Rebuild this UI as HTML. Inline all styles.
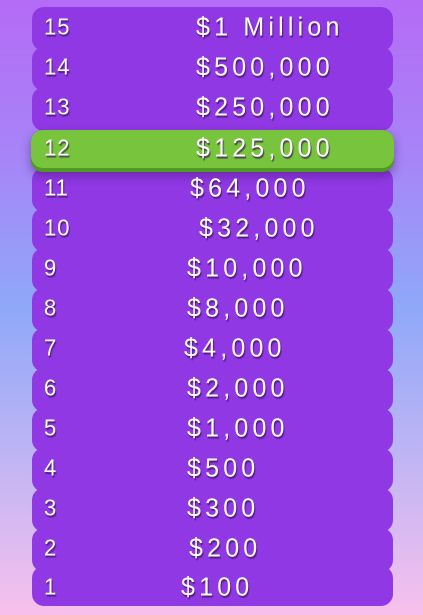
<!DOCTYPE html>
<html><head><style>
html,body{margin:0;padding:0}
body{width:423px;height:615px;position:relative;overflow:hidden;
background:linear-gradient(180deg,#b46bf6 0%,#a784f7 25%,#8fa8f8 50%,#c7b7f3 78%,#f7c0ec 100%);
font-family:"Liberation Sans",sans-serif;}
.r{position:absolute;left:32px;width:361px;height:44px;background:#9138e5;border-radius:12px;}
.t{position:absolute;color:#fff;font-size:25px;letter-spacing:4.2px;text-shadow:1px 2px 1px rgba(60,20,90,.75);line-height:40px;transform:scaleY(1.05)}
.n{left:44px;font-size:22px;letter-spacing:1px}
.g{position:absolute;left:31px;top:130px;width:363px;height:42px;background:#4f9a22;border-radius:12px;box-shadow:0 4px 10px rgba(60,20,100,.45)}
.g::before{content:"";position:absolute;left:0;top:0;right:0;height:38px;background:#78c43c;border-radius:12px}
</style></head><body>
<div class="r" style="top:7px"></div>
<div class="r" style="top:47px"></div>
<div class="r" style="top:87px"></div>
<div class="r" style="top:168px"></div>
<div class="r" style="top:208px"></div>
<div class="r" style="top:248px"></div>
<div class="r" style="top:288px"></div>
<div class="r" style="top:328px"></div>
<div class="r" style="top:368px"></div>
<div class="r" style="top:408px"></div>
<div class="r" style="top:448px"></div>
<div class="r" style="top:488px"></div>
<div class="r" style="top:528px"></div>
<div class="r" style="top:566px;height:40px"></div>
<div class="g"></div>
<div class="t n" style="top:7px">15</div><div class="t" style="top:7px;left:196px">$1 Million</div>
<div class="t n" style="top:47px">14</div><div class="t" style="top:47px;left:196px">$500,000</div>
<div class="t n" style="top:87px">13</div><div class="t" style="top:87px;left:196px">$250,000</div>
<div class="t n" style="top:128px">12</div><div class="t" style="top:128px;left:196px">$125,000</div>
<div class="t n" style="top:168px">11</div><div class="t" style="top:168px;left:190px">$64,000</div>
<div class="t n" style="top:208px">10</div><div class="t" style="top:208px;left:199px">$32,000</div>
<div class="t n" style="top:248px">9</div><div class="t" style="top:248px;left:187px">$10,000</div>
<div class="t n" style="top:288px">8</div><div class="t" style="top:288px;left:187px">$8,000</div>
<div class="t n" style="top:328px">7</div><div class="t" style="top:328px;left:184px">$4,000</div>
<div class="t n" style="top:368px">6</div><div class="t" style="top:368px;left:187px">$2,000</div>
<div class="t n" style="top:408px">5</div><div class="t" style="top:408px;left:187px">$1,000</div>
<div class="t n" style="top:448px">4</div><div class="t" style="top:448px;left:187px">$500</div>
<div class="t n" style="top:488px">3</div><div class="t" style="top:488px;left:187px">$300</div>
<div class="t n" style="top:528px">2</div><div class="t" style="top:528px;left:189px">$200</div>
<div class="t n" style="top:567px">1</div><div class="t" style="top:567px;left:181px">$100</div>
</body></html>
